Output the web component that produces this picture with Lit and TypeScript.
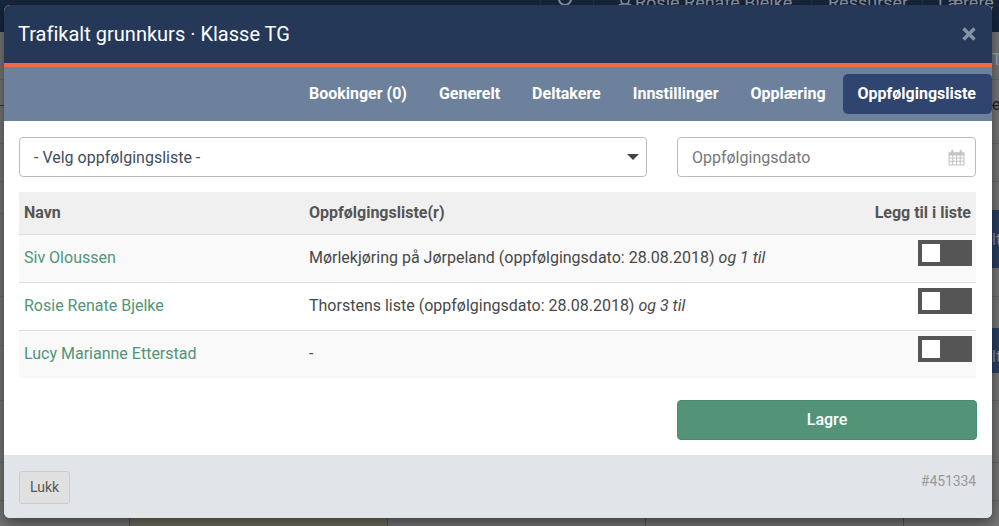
import { LitElement, html, css } from "lit";
import { customElement } from "lit/decorators.js";

const rows = [
  { name: "Siv Oloussen", list: "Mørlekjøring på Jørpeland (oppfølgingsdato: 28.08.2018)", more: "og 1 til" },
  { name: "Rosie Renate Bjelke", list: "Thorstens liste (oppfølgingsdato: 28.08.2018)", more: "og 3 til" },
  { name: "Lucy Marianne Etterstad", list: "-", more: "" },
];
const tabs = ["Bookinger (0)", "Generelt", "Deltakere", "Innstillinger", "Opplæring", "Oppfølgingsliste"];
const hLines = [79, 143, 181, 213, 296, 345, 400, 462, 500];
const vLines = [129, 387, 645, 903];
const topSeps = [540, 593, 811, 922];

@customElement("app-root")
export class AppRoot extends LitElement {
  static styles = css`
    :host {
      display: block; position: relative; width: 999px; height: 526px; overflow: hidden;
      font-family: Roboto, "Liberation Sans", sans-serif; font-size: 16px; color: #444;
      background: #777;
    }
    * { box-sizing: border-box; }
    .page { position: absolute; inset: 0; overflow: hidden; }
    .topbar { position: absolute; left: 0; top: 0; width: 999px; height: 32px; background: #18263c; color: #8d96a3; font-size: 18px; }
    .topbar span { position: absolute; top: -7px; line-height: 20px; white-space: nowrap; }
    .topbar i { position: absolute; top: 0; width: 1px; height: 32px; background: #24334b; }
    .user { position: absolute; left: 615px; top: 0; width: 20px; height: 8px; }
    .ring { position: absolute; left: 558px; top: -8px; width: 14px; height: 14px; border: 2px solid #8d96a3; border-radius: 50%; }
    .band { position: absolute; left: 992px; width: 7px; background: #2a3f63; color: #8a93a3; overflow: hidden; white-space: nowrap; }
    .band b { font-weight: 400; position: absolute; left: 0; }
    .line { position: absolute; left: 0; width: 999px; height: 1px; background: #6a6a6a; }
    .vline { position: absolute; top: 400px; bottom: 0; width: 1px; background: #555; }
    .txt { position: absolute; left: 992px; color: #222; white-space: nowrap; }
    .bottom { position: absolute; left: 130px; top: 518px; width: 257px; height: 8px; background: #6f6f60; }
    .shell { position: relative; display: flex; padding: 5px 7px 8px 4px; height: 526px; }
    .modal {
      flex: 1; display: flex; flex-direction: column; background: #fff; border-radius: 6px; overflow: hidden;
      box-shadow: 0 5px 15px rgba(0,0,0,.5);
    }
    .head {
      height: 62px; flex: none; background: #253858; border-bottom: 4px solid #f0694a; color: #fff;
      display: flex; align-items: center; justify-content: space-between; padding: 0 16px 0 14px;
    }
    .head h4 { margin: 0; font-size: 20px; font-weight: 400; line-height: 24px; letter-spacing: .01px; }
    .close { display: block; width: 14px; height: 14px; }
    .tabs {
      height: 54px; flex: none; background: #6e819c; display: flex; justify-content: flex-end; align-items: center;
      gap: 2px;
    }
    .tab { height: 40px; line-height: 40px; padding: 0 15px; color: #fff; font-weight: 700; font-size: 16px; border-radius: 5px; }
    .tab.on { background: #2f4570; padding-right: 16px; }
    .body { flex: 1; padding: 16px 15px 0; display: flex; flex-direction: column; }
    .form { display: grid; grid-template-columns: 628px 299px; gap: 30px; }
    .field {
      height: 40px; border: 1px solid #bbb; border-radius: 4px; display: flex; align-items: center;
      justify-content: space-between; padding: 0 7px 0 14px; background: #fff;
    }
    .select { color: #3f4d5f; }
    .date { color: #777; }
    .arrow { width: 0; height: 0; border-left: 6px solid transparent; border-right: 6px solid transparent; border-top: 6px solid #444; }
    .cal { display: block; width: 17px; height: 17px; margin-right: 3px; }
    table { width: 957px; border-collapse: collapse; margin-top: 15px; font-size: 16px; table-layout: fixed; }
    th { height: 42px; background: #f0f0f0; border-bottom: 1px solid #ddd; text-align: left; color: #555; font-weight: 700; padding: 0 5px; }
    td { height: 48px; border-bottom: 1px solid #ddd; padding: 0 5px 2px; vertical-align: middle; color: #484848; }
    tr:nth-child(odd) td { background: #f9f9f9; }
    tr:last-child td { border-bottom: 0; }
    td.name { color: #4f9579; }
    .r { text-align: right; }
    td.r { vertical-align: top; padding: 5px 4px 0 0; }
    .toggle { display: inline-block; width: 54px; height: 26px; background: #555; padding: 4px; vertical-align: top; }
    .toggle i { display: block; width: 18px; height: 18px; background: #fff; }
    .actions { display: flex; justify-content: flex-end; margin-top: 22px; }
    .save {
      width: 300px; height: 40px; background: #539479; border: 1px solid #4a8a70; border-radius: 4px;
      color: #fff; font: 500 16px Roboto, sans-serif; padding: 0 0 2px;
    }
    .foot {
      height: 63px; flex: none; background: #e1e4e9; display: flex; justify-content: space-between; align-items: flex-start;
      padding: 16px 16px 0 15px;
    }
    .lukk {
      width: 51px; height: 33px; border: 1px solid #ccc; border-radius: 3px; background: #e0e0e0; color: #555;
      font: 400 14px Roboto, sans-serif; padding: 0 0 2px;
    }
    .id { color: #999; font-size: 14px; line-height: 20px; letter-spacing: -.1px; }
  `;

  render() {
    return html`
      <div class="page" aria-hidden="true">
        ${hLines.map(y => html`<div class="line" style="top:${y}px"></div>`)}
        <div class="line" style="top:105px;background:#333"></div>
        <div class="bottom"></div>
        ${vLines.map(x => html`<div class="vline" style="left:${x}px"></div>`)}
        <div class="topbar">
          ${topSeps.map(x => html`<i style="left:${x}px"></i>`)}
          <div class="ring"></div>
          <svg class="user" viewBox="0 0 20 8"><path d="M6 0c0 3 2 4 4 4s4-1 4-4M2 8c1-2 3-4 6-4M18 8c-1-2-3-4-6-4" fill="none" stroke="#8d96a3" stroke-width="1.500"/></svg>
          <span style="left:635px">Rosie Renate Bjelke</span>
          <span style="left:828px">Ressurser</span>
          <span style="left:938px">Lærere</span>
        </div>
        <span class="txt" style="top:50px;color:#8ad">Ti</span>
        <span class="txt" style="top:95px">e</span>
        <div class="band" style="top:210px;height:58px"><b style="top:20px">lt</b></div>
        <div class="band" style="top:328px;height:45px"><b style="top:19px">lt</b></div>
      </div>
      <div class="shell">
        <div class="modal">
          <div class="head">
            <h4>Trafikalt grunnkurs · Klasse TG</h4>
            <svg class="close" viewBox="0 0 14 14"><path d="M1.500 1.500 12.500 12.500M12.500 1.500 1.500 12.500" stroke="#8593a8" stroke-width="3.400" fill="none"/></svg>
          </div>
          <div class="tabs">
            ${tabs.map((t, i) => html`<div class="tab ${i === tabs.length - 1 ? "on" : ""}">${t}</div>`)}
          </div>
          <div class="body">
            <div class="form">
              <div class="field select"><span>- Velg oppfølgingsliste -</span><i class="arrow"></i></div>
              <div class="field date">
                <span>Oppfølgingsdato</span>
                <svg class="cal" viewBox="0 0 16 16"><path fill="#c4c4c4" fill-rule="evenodd" d="M3 1h2v2h6V1h2v2h2.500v12.500H.5V3H3zM1.500 6v2h2.500V6zm3.500 0v2h2.500V6zm3.500 0v2H11V6zm3.500 0v2h2.500V6zM1.500 9v2h2.500V9zm3.500 0v2h2.500V9zm3.500 0v2H11V9zm3.500 0v2h2.500V9zm-10.500 3v2.500h2.500V12zm3.500 0v2.500h2.500V12zm3.500 0v2.500H11V12zm3.500 0v2.500h2.500V12z"/></svg>
              </div>
            </div>
            <table>
              <colgroup><col style="width:285px"/><col/><col style="width:140px"/></colgroup>
              <thead><tr><th>Navn</th><th>Oppfølgingsliste(r)</th><th class="r">Legg til i liste</th></tr></thead>
              <tbody>
                ${rows.map(r => html`<tr>
                  <td class="name">${r.name}</td>
                  <td>${r.list} <em>${r.more}</em></td>
                  <td class="r"><span class="toggle"><i></i></span></td>
                </tr>`)}
              </tbody>
            </table>
            <div class="actions"><button class="save">Lagre</button></div>
          </div>
          <div class="foot">
            <button class="lukk">Lukk</button>
            <span class="id">#451334</span>
          </div>
        </div>
      </div>
    `;
  }
}
